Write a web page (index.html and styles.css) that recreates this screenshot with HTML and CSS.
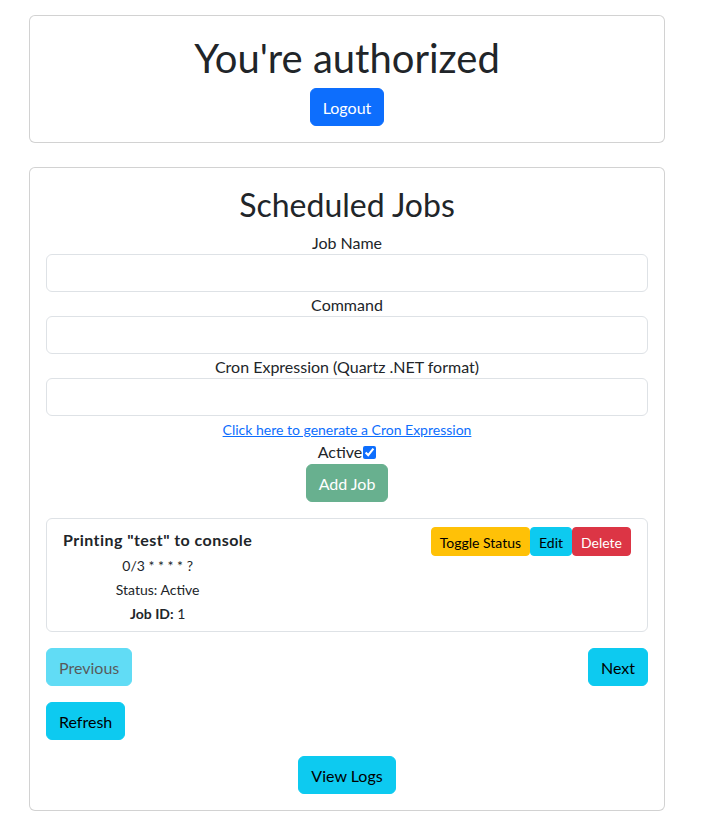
FILE: index.html
```html
<!DOCTYPE html>
<html lang="en">
<head>
<meta charset="utf-8">
<title>Scheduled Jobs</title>
<link rel="stylesheet" href="styles.css">
</head>
<body>
<div class="page">
  <section class="card center">
    <h1 class="title">You're authorized</h1>
    <button class="btn btn-primary">Logout</button>
  </section>

  <section class="card">
    <h2 class="subtitle center">Scheduled Jobs</h2>
    <form class="job-form">
      <label class="field-label">Job Name</label>
      <input class="form-control" type="text">
      <label class="field-label">Command</label>
      <input class="form-control" type="text">
      <label class="field-label">Cron Expression (Quartz .NET format)</label>
      <input class="form-control" type="text">
      <div class="gen"><a href="#">Click here to generate a Cron Expression</a></div>
      <div class="active-row"><label>Active</label><input type="checkbox" class="check" checked></div>
      <div class="center"><button type="button" class="btn btn-success disabled">Add Job</button></div>
    </form>

    <div class="job-card">
      <div class="job-info">
        <div class="job-name">Printing "test" to console</div>
        <div class="job-line">0/3 * * * * ?</div>
        <div class="job-line">Status: Active</div>
        <div class="job-line"><strong>Job ID:</strong> 1</div>
      </div>
      <div class="job-actions">
        <button class="btn btn-sm btn-warning">Toggle Status</button><button class="btn btn-sm btn-info">Edit</button><button class="btn btn-sm btn-danger">Delete</button>
      </div>
    </div>

    <div class="pager">
      <button class="btn btn-info disabled">Previous</button>
      <button class="btn btn-info">Next</button>
    </div>
    <div class="refresh-row"><button class="btn btn-info">Refresh</button></div>
    <div class="center logs-row"><button class="btn btn-info">View Logs</button></div>
  </section>
</div>
</body>
</html>
```
FILE: styles.css
```css
* { box-sizing: border-box; }
body {
  margin: 0;
  font-family: Lato, "Liberation Sans", sans-serif;
  font-size: 16px;
  line-height: 1.5;
  color: #212529;
  background: #fff;
}
.page {
  width: 636px;
  margin-left: 29px;
  padding-top: 15px;
}
.card {
  border: 1px solid rgba(0,0,0,.175);
  border-radius: 6px;
  padding: 16px;
  margin-bottom: 24px;
  background: #fff;
}
.center { text-align: center; }
.title {
  font-size: 40px;
  font-weight: 400;
  line-height: 1.2;
  margin: 0 0 6px;
  padding-top: 2px;
}
.subtitle {
  font-size: 32px;
  font-weight: 400;
  line-height: 1.2;
  margin: 0 0 6px;
  padding-top: 2px;
}
.btn {
  display: inline-block;
  font-family: inherit;
  font-size: 16px;
  line-height: 24px;
  padding: 7px 12px 5px;
  border: 1px solid transparent;
  border-radius: 6px;
  cursor: pointer;
  vertical-align: middle;
}
.btn-sm {
  font-size: 14px;
  line-height: 21px;
  padding: 4px 8px 2px;
  border-radius: 4px;
}
.btn-primary { background: #0d6efd; border-color: #0d6efd; color: #fff; }
.btn-success { background: #198754; border-color: #198754; color: #fff; }
.btn-warning { background: #ffc107; border-color: #ffc107; color: #000; }
.btn-info { background: #0dcaf0; border-color: #0dcaf0; color: #000; }
.btn-danger { background: #dc3545; border-color: #dc3545; color: #fff; }
.btn.disabled { opacity: .65; pointer-events: none; }

.job-form {
  display: flex;
  flex-direction: column;
  margin: 0;
}
.field-label {
  display: block;
  text-align: center;
  line-height: 24px;
  padding-top: 1px;
  margin-bottom: -1px;
}
.form-control {
  display: block;
  width: 100%;
  height: 38px;
  padding: 6px 12px;
  font: inherit;
  border: 1px solid #dee2e6;
  border-radius: 6px;
  background: #fff;
}
.gen {
  text-align: center;
  font-size: 14px;
  line-height: 22px;
  padding-top: 3px;
  margin-bottom: -1px;
}
.gen a { color: #0d6efd; text-decoration: underline; }
.active-row {
  display: flex;
  justify-content: center;
  align-items: center;
  height: 24px;
}
.check {
  margin: 1px 0 0 1px;
  width: 13px;
  height: 13px;
  accent-color: #0d6efd;
}
.job-card {
  margin-top: 16px;
  border: 1px solid #dee2e6;
  border-radius: 6px;
  padding: 8px 16px 5px;
  display: flex;
  justify-content: space-between;
  align-items: flex-start;
}
.job-info { text-align: center; }
.job-name {
  font-weight: 700;
  line-height: 24px;
  letter-spacing: 0.45px;
  padding-top: 1px;
  margin-bottom: 2px;
}
.job-line {
  font-size: 14px;
  line-height: 24px;
}
.job-actions { display: flex; }
.pager {
  display: flex;
  justify-content: space-between;
  margin-top: 16px;
}
.refresh-row { margin-top: 16px; }
.logs-row { margin-top: 16px; }
```
